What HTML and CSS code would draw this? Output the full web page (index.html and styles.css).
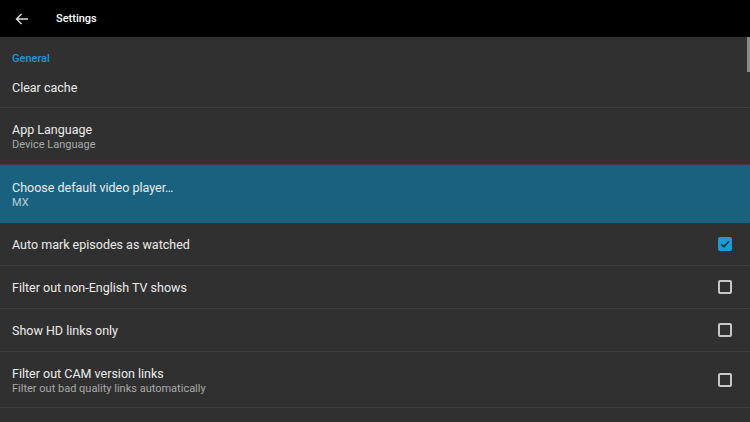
FILE: index.html
```html
<!DOCTYPE html>
<html lang="en">
<head>
	<meta charset="UTF-8">
	<title>Settings</title>
	<link rel="stylesheet" href="styles.css">
</head>
<body>
	<div class="topbar">
		<svg class="back" width="14" height="12" viewBox="0 0 14 12">
			<path d="M13 6H1.5M6.5 1L1.5 6l5 5" fill="none" stroke="#e0e0e0" stroke-width="1.4"/>
		</svg>
		<span class="title">Settings</span>
	</div>
	<div class="content">
		<div class="scroll"></div>
		<div class="section">General</div>
		<div class="item first">
			<div class="text"><div class="name">Clear cache</div></div>
		</div>
		<div class="item two">
			<div class="text">
				<div class="name">App Language</div>
				<div class="sub">Device Language</div>
			</div>
		</div>
		<div class="item two selected">
			<div class="text">
				<div class="name">Choose default video player…</div>
				<div class="sub">MX</div>
			</div>
		</div>
		<div class="item">
			<div class="text"><div class="name">Auto mark episodes as watched</div></div>
			<span class="check on">
				<svg width="14" height="14" viewBox="0 0 14 14"><path d="M3.2 7.2l2.6 2.5 5-5.2" fill="none" stroke="#1d2a30" stroke-width="1.5"/></svg>
			</span>
		</div>
		<div class="item">
			<div class="text"><div class="name">Filter out non-English TV shows</div></div>
			<span class="check"></span>
		</div>
		<div class="item">
			<div class="text"><div class="name">Show HD links only</div></div>
			<span class="check"></span>
		</div>
		<div class="item cam">
			<div class="text">
				<div class="name">Filter out CAM version links</div>
				<div class="sub">Filter out bad quality links automatically</div>
			</div>
			<span class="check"></span>
		</div>
		<div class="item last"></div>
	</div>
</body>
</html>
```

FILE: styles.css
```css
*{
	margin: 0;
	padding: 0;
	box-sizing: border-box;
}
body{
	width: 750px;
	height: 422px;
	overflow: hidden;
	background-color: #303030;
	font-family: Roboto, "Liberation Sans", sans-serif;
	color: #ebebeb;
}
.topbar{
	display: flex;
	align-items: center;
	height: 37px;
	background-color: #000;
}
.back{
	margin: 0 0 0 15px;
}
.topbar .title{
	margin-left: 27px;
	font-size: 11px;
	font-weight: 500;
	color: #fff;
}
.content{
	position: relative;
	height: 385px;
	overflow: hidden;
}
.scroll{
	position: absolute;
	top: 0;
	right: 0;
	width: 3px;
	height: 35px;
	background-color: #8a8a8a;
}
.section{
	height: 29px;
	padding: 14px 0 0 12px;
	font-size: 11px;
	line-height: 16px;
	font-weight: 500;
	color: #1c9ad6;
}
.item{
	display: flex;
	align-items: center;
	height: 43px;
	padding: 2px 18px 0 12px;
	border-bottom: 1px solid #3d3d3d;
}
.item.first{
	height: 42px;
}
.item.two{
	height: 57px;
}
.item.cam{
	height: 56px;
}
.selected{
	height: 58px !important;
	background-color: #1a6180;
	border-bottom-color: #1a6180;
}
.text{
	flex: 1;
}
.name{
	font-size: 12.5px;
	line-height: 16px;
}
.sub{
	font-size: 11px;
	line-height: 14px;
	color: #a9a9a9;
}
.selected .sub{
	color: #b9ccd4;
}
.check{
	width: 14px;
	height: 14px;
	margin-top: -2px;
	border: 2px solid #c6c6c6;
	border-radius: 2px;
}
.check.on{
	border: none;
	background-color: #1b9ad6;
}
.check svg{
	display: block;
}
```
